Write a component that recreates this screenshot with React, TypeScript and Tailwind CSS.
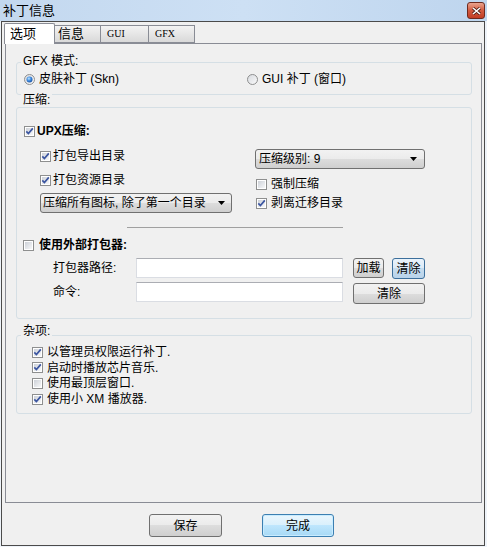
import React from 'react'

function Check({ on }: { on?: boolean }) {
  return (
    <svg width="11" height="11" viewBox="0 0 11 11" className="shrink-0">
      <defs>
        <linearGradient id="cbx" x1="0" y1="0" x2="1" y2="1">
          <stop offset="0" stopColor="#cdd1d8" />
          <stop offset="1" stopColor="#f7f8f9" />
        </linearGradient>
      </defs>
      <rect x="0.5" y="0.5" width="10" height="10" fill="#fff" stroke="#8e8f8f" />
      <rect x="2" y="2" width="7" height="7" fill="url(#cbx)" />
      {on && <path d="M2.3 5.4 L4.4 7.6 L8.8 2.4" stroke="#3b55a0" strokeWidth="1.7" fill="none" />}
    </svg>
  )
}

function Radio({ on }: { on?: boolean }) {
  return (
    <svg width="11" height="11" viewBox="0 0 11 11" className="shrink-0">
      <defs>
        <linearGradient id="rbg" x1="0" y1="0" x2="1" y2="1">
          <stop offset="0" stopColor="#d6d9de" />
          <stop offset="1" stopColor="#fbfbfb" />
        </linearGradient>
        <radialGradient id="rdot" cx="0.4" cy="0.35" r="0.7">
          <stop offset="0" stopColor="#bfe6ff" />
          <stop offset="0.5" stopColor="#3d8ae0" />
          <stop offset="1" stopColor="#1b4f9c" />
        </radialGradient>
      </defs>
      <circle cx="5.5" cy="5.5" r="5" fill="url(#rbg)" stroke="#8e8f8f" />
      {on && <circle cx="5.5" cy="5.5" r="3" fill="url(#rdot)" />}
    </svg>
  )
}

function Arrow() {
  return (
    <svg width="7" height="4" viewBox="0 0 7 4" className="shrink-0">
      <path d="M0 0 H7 L3.5 4 Z" fill="#000" />
    </svg>
  )
}

function Group({ label, top, className, children }: { label: string; top: string; className: string; children?: React.ReactNode }) {
  return (
    <div className={`relative w-[456px] border border-[#d5dfe5] rounded-[3px] ${className}`}>
      <span className={`absolute left-[4px] ${top} bg-[#f0f0f0] px-[2px] leading-[14px]`}>{label}</span>
      {children}
    </div>
  )
}

const btn =
  'border border-[#707070] rounded-[3px] bg-[linear-gradient(to_bottom,#f2f2f2_0%,#ebebeb_50%,#dddddd_50%,#cfcfcf_100%)] flex items-center justify-center leading-none'

export default function App() {
  return (
    <div className="w-[487px] h-[547px] flex flex-col bg-[#eef3f9] overflow-hidden text-[12px] text-black font-['Liberation_Sans','Noto_Sans_CJK_SC',sans-serif]">
      {/* title bar */}
      <div className="h-[21px] shrink-0 flex items-center justify-between pl-[3px] pr-[2px] bg-gradient-to-r from-[#c3d8ef] via-[#cde0f4] to-[#bed5ee]">
        <span className="text-[13px] leading-none">补丁信息</span>
        <div className="w-[18px] h-[17px] rounded-[3px] border border-[#6e2a1f] bg-gradient-to-b from-[#e9a38e] via-[#d25a40] to-[#c23d24] flex items-center justify-center">
          <svg width="9" height="8" viewBox="0 0 9 8">
            <path d="M1 1 L8 7 M8 1 L1 7" stroke="#4a1a12" strokeWidth="3" />
            <path d="M1 1 L8 7 M8 1 L1 7" stroke="#fff" strokeWidth="1.6" />
          </svg>
        </div>
      </div>

      <div className="flex-1 pl-[1px] pr-[2px] pb-[1px]">
        <div className="h-full border border-[#4b4b4b] bg-[#f0f0f0] flex flex-col">
          {/* tabs */}
          <div className="h-[22px] -mb-[1px] flex items-end pl-[2px] relative z-10">
            <div className="w-[51px] h-[21px] bg-white border border-b-0 border-[#898c95] rounded-t-[2px] pl-[5px] text-[13px] leading-[19px]">选项</div>
            <div className="w-[46px] h-[18px] mb-[1px] border border-l-0 border-[#898c95] bg-gradient-to-b from-[#f3f3f3] to-[#d9d9d9] pl-[3px] text-[13px] leading-[16px]">信息</div>
            <div className="w-[48px] h-[18px] mb-[1px] border border-l-0 border-[#898c95] bg-gradient-to-b from-[#f3f3f3] to-[#d9d9d9] pl-[6px] text-[10px] leading-[16px] font-['Liberation_Serif',serif]">GUI</div>
            <div className="w-[46px] h-[18px] mb-[1px] border border-l-0 border-[#898c95] bg-gradient-to-b from-[#f3f3f3] to-[#d9d9d9] pl-[6px] text-[10px] leading-[16px] font-['Liberation_Serif',serif]">GFX</div>
          </div>

          {/* tab page */}
          <div className="ml-[3px] w-[477px] h-[460px] shrink-0 border border-[#898c95] bg-[#f0f0f0] pl-[10px] pt-[18px]">
            <Group label="GFX 模式:" top="-top-[9px]" className="h-[33px] pt-[9px]">
              <div className="flex items-center h-[14px] pl-[7px]">
                <div className="w-[223px] flex items-center">
                  <Radio on />
                  <span className="ml-[4px]">皮肤补丁 (Skn)</span>
                </div>
                <Radio />
                <span className="ml-[4px]">GUI 补丁 (窗口)</span>
              </div>
            </Group>

            <Group label="压缩:" top="-top-[15px]" className="h-[212px] mt-[12px]">
              <div className="flex items-center h-[14px] mt-[16px] pl-[7px]">
                <Check on />
                <span className="ml-[2px] font-bold">UPX压缩:</span>
              </div>

              <div className="flex mt-[11px]">
                <div className="ml-[23px] w-[215px] flex flex-col">
                  <div className="flex items-center h-[14px]">
                    <Check on />
                    <span className="ml-[2px]">打包导出目录</span>
                  </div>
                  <div className="flex items-center h-[14px] mt-[10px]">
                    <Check on />
                    <span className="ml-[2px]">打包资源目录</span>
                  </div>
                  <div className={`${btn} w-[192px] h-[20px] mt-[6px] !justify-between pl-[2px] pr-[6px]`}>
                    <span>压缩所有图标, 除了第一个目录</span>
                    <Arrow />
                  </div>
                </div>
                <div className="w-[170px] flex flex-col">
                  <div className={`${btn} h-[20px] !justify-between pl-[3px] pr-[7px]`}>
                    <span>压缩级别: 9</span>
                    <Arrow />
                  </div>
                  <div className="flex items-center h-[14px] mt-[8px] pl-[1px]">
                    <Check />
                    <span className="ml-[4px]">强制压缩</span>
                  </div>
                  <div className="flex items-center h-[14px] mt-[5px] pl-[1px]">
                    <Check on />
                    <span className="ml-[4px]">剥离迁移目录</span>
                  </div>
                </div>
              </div>

              <div className="ml-[110px] w-[216px] mt-[14px] h-[1px] bg-[#a0a0a0]" />

              <div className="flex items-center h-[14px] mt-[10px] ml-[6px]">
                <Check />
                <span className="ml-[5px] font-bold">使用外部打包器:</span>
              </div>

              <div className="flex items-start mt-[6px] ml-[36px]">
                <span className="w-[83px] leading-[20px]">打包器路径:</span>
                <div className="w-[207px] h-[20px] bg-white border border-[#dadde3] border-t-[#abadb3]" />
                <div className={`${btn} ml-[10px] w-[31px] h-[20px]`}>加载</div>
                <div className="ml-[8px] w-[33px] h-[21px] rounded-[3px] border border-[#3c6f9c] bg-[linear-gradient(to_bottom,#eaf3fb_0%,#dbeaf7_50%,#c6dcee_50%,#b9d3ea_100%)] flex items-center justify-center leading-none">清除</div>
              </div>

              <div className="flex items-start mt-[3px] ml-[36px]">
                <span className="w-[83px] leading-[20px]">命令:</span>
                <div className="w-[207px] h-[20px] bg-white border border-[#dadde3] border-t-[#abadb3]" />
                <div className={`${btn} ml-[10px] mt-[1px] w-[72px] h-[21px]`}>清除</div>
              </div>
            </Group>

            <Group label="杂项:" top="-top-[12px]" className="h-[79px] mt-[16px] pt-[8px] pl-[15px]">
              <div className="flex items-center h-[16px]">
                <Check on />
                <span className="ml-[4px]">以管理员权限运行补丁.</span>
              </div>
              <div className="flex items-center h-[15px]">
                <Check on />
                <span className="ml-[4px]">启动时播放芯片音乐.</span>
              </div>
              <div className="flex items-center h-[16px]">
                <Check />
                <span className="ml-[4px]">使用最顶层窗口.</span>
              </div>
              <div className="flex items-center h-[16px]">
                <Check on />
                <span className="ml-[4px]">使用小 XM 播放器.</span>
              </div>
            </Group>
          </div>

          {/* bottom buttons */}
          <div className="flex mt-[11px] ml-[147px]">
            <div className={`${btn} w-[73px] h-[23px]`}>保存</div>
            <div className="ml-[40px] w-[72px] h-[23px] rounded-[3px] border border-[#3c7fb1] shadow-[inset_0_0_0_1px_#c9ecff] bg-[linear-gradient(to_bottom,#eaf6fd_0%,#d9f0fc_50%,#bee6fd_50%,#a7d9f5_100%)] flex items-center justify-center leading-none">完成</div>
          </div>
        </div>
      </div>
    </div>
  )
}
